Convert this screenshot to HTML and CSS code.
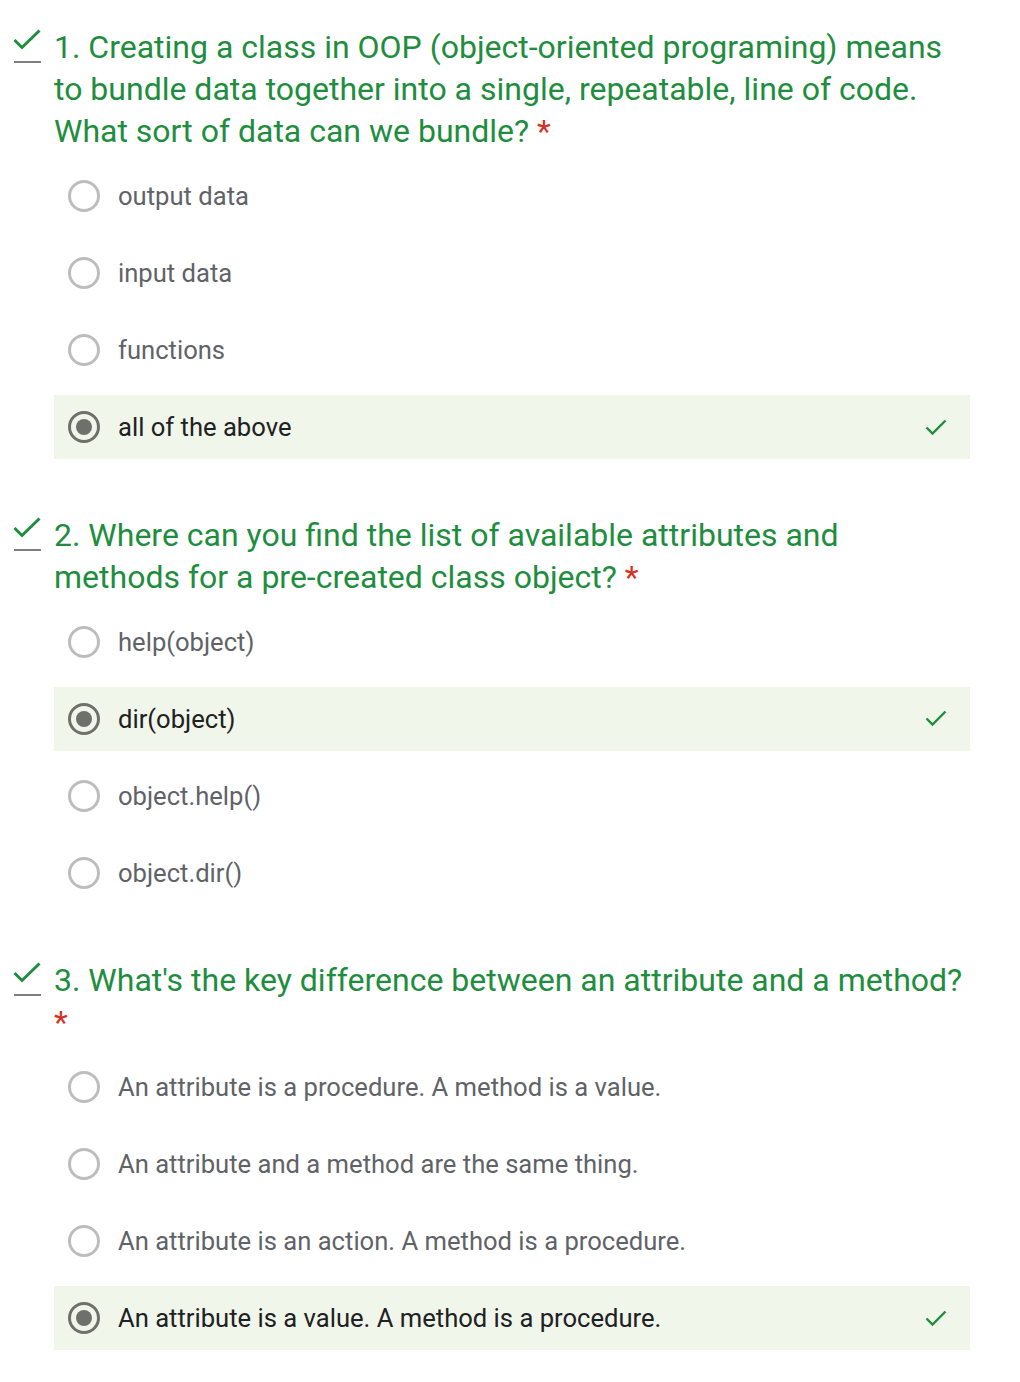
FILE: index.html
```html
<!DOCTYPE html>
<html>
<head>
<meta charset="utf-8">
<link rel="stylesheet" href="styles.css">
</head>
<body>
<main class="form">
  <section class="question">
    <div class="mark">
      <svg class="mark-check" width="28" height="22" viewBox="0 0 28 22"><path d="M1.5 11 L9 18.5 L26.5 1.5" fill="none" stroke="#1e8e3e" stroke-width="3"/></svg>
      <span class="mark-line"></span>
    </div>
    <div class="body">
      <h2 class="title">1. Creating a class in OOP (object-oriented programing) means to bundle data together into a single, repeatable, line of code. What sort of data can we bundle? <span class="req">*</span></h2>
      <div class="options">
        <div class="option"><span class="radio"></span><span class="label">output data</span></div>
        <div class="option"><span class="radio"></span><span class="label">input data</span></div>
        <div class="option"><span class="radio"></span><span class="label">functions</span></div>
        <div class="option selected"><span class="radio"></span><span class="label">all of the above</span>
          <svg class="ok" width="22" height="17" viewBox="0 0 22 17"><path d="M1.5 8.5 L7.5 14.5 L20.5 1.5" fill="none" stroke="#1e8e3e" stroke-width="2.4"/></svg>
        </div>
      </div>
    </div>
  </section>

  <section class="question">
    <div class="mark">
      <svg class="mark-check" width="28" height="22" viewBox="0 0 28 22"><path d="M1.5 11 L9 18.5 L26.5 1.5" fill="none" stroke="#1e8e3e" stroke-width="3"/></svg>
      <span class="mark-line"></span>
    </div>
    <div class="body">
      <h2 class="title">2. Where can you find the list of available attributes and methods for a pre-created class object? <span class="req">*</span></h2>
      <div class="options">
        <div class="option"><span class="radio"></span><span class="label">help(object)</span></div>
        <div class="option selected"><span class="radio"></span><span class="label">dir(object)</span>
          <svg class="ok" width="22" height="17" viewBox="0 0 22 17"><path d="M1.5 8.5 L7.5 14.5 L20.5 1.5" fill="none" stroke="#1e8e3e" stroke-width="2.4"/></svg>
        </div>
        <div class="option"><span class="radio"></span><span class="label">object.help()</span></div>
        <div class="option"><span class="radio"></span><span class="label">object.dir()</span></div>
      </div>
    </div>
  </section>

  <section class="question">
    <div class="mark">
      <svg class="mark-check" width="28" height="22" viewBox="0 0 28 22"><path d="M1.5 11 L9 18.5 L26.5 1.5" fill="none" stroke="#1e8e3e" stroke-width="3"/></svg>
      <span class="mark-line"></span>
    </div>
    <div class="body">
      <h2 class="title">3. What's the key difference between an attribute and a method? <span class="req">*</span></h2>
      <div class="options">
        <div class="option"><span class="radio"></span><span class="label">An attribute is a procedure. A method is a value.</span></div>
        <div class="option"><span class="radio"></span><span class="label">An attribute and a method are the same thing.</span></div>
        <div class="option"><span class="radio"></span><span class="label">An attribute is an action. A method is a procedure.</span></div>
        <div class="option selected"><span class="radio"></span><span class="label">An attribute is a value. A method is a procedure.</span>
          <svg class="ok" width="22" height="17" viewBox="0 0 22 17"><path d="M1.5 8.5 L7.5 14.5 L20.5 1.5" fill="none" stroke="#1e8e3e" stroke-width="2.4"/></svg>
        </div>
      </div>
    </div>
  </section>
</main>
</body>
</html>
```

FILE: styles.css
```css
* { box-sizing: border-box; }
html, body { margin: 0; padding: 0; background: #fff; }
body { font-family: Roboto, "Noto Sans", Arial, sans-serif; }

.form {
  display: flex;
  flex-direction: column;
  gap: 54.5px;
  padding: 26px 0 0 0;
}

.question {
  display: flex;
  align-items: flex-start;
}

.mark {
  width: 54px;
  flex: none;
  display: flex;
  flex-direction: column;
  align-items: flex-start;
  padding: 3px 0 0 13px;
}
.mark-check { display: block; }
.mark-line {
  display: block;
  width: 27px;
  height: 2px;
  background: #7d7f82;
  margin-top: 10px;
  margin-left: 1px;
}

.body {
  width: 916px;
  display: flex;
  flex-direction: column;
  gap: 12px;
}

.title {
  margin: 0;
  width: 912px;
  font-weight: 400;
  font-size: 32px;
  line-height: 42px;
  color: #1e8e3e;
}
.req { color: #d93025; }

.options {
  display: flex;
  flex-direction: column;
  gap: 13px;
}

.option {
  height: 64px;
  display: flex;
  align-items: center;
  padding: 0 23px 0 14px;
  font-size: 25.6px;
  color: #5f6368;
}
.option.selected {
  background: #f0f6e9;
  color: #202124;
}

.radio {
  width: 32px;
  height: 32px;
  flex: none;
  border: 3.2px solid #bdbdbd;
  border-radius: 50%;
  margin-right: 18px;
  display: flex;
  align-items: center;
  justify-content: center;
}
.selected .radio { border-color: #6e706c; }
.selected .radio::after {
  content: "";
  width: 16px;
  height: 16px;
  border-radius: 50%;
  background: #6e706c;
}

.label { flex: 1; }
.ok { flex: none; }
```
